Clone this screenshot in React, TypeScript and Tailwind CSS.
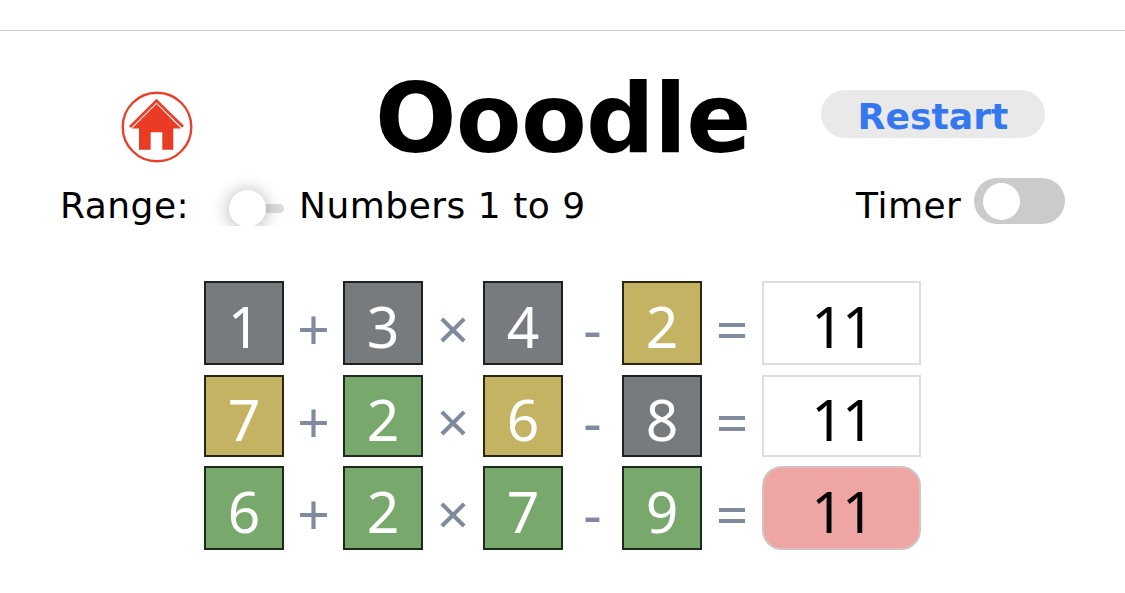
import React, { useState } from "react";
import clsx from "clsx";

type Status = "absent" | "present" | "correct";

interface Guess {
  digits: string[];
  statuses: Status[];
  total: number;
  solved: boolean;
  row: string;
}

const OPERATORS = ["+", "×", "-", "="];

const TILE_COLORS: Record<Status, string> = {
  absent: "bg-[#787b7e] border-[#1e2022]",
  present: "bg-[#c5b364] border-[#2c2712]",
  correct: "bg-[#79a86c] border-[#1d2b1a]",
};

const GUESSES: Guess[] = [
  { digits: ["1", "3", "4", "2"], statuses: ["absent", "absent", "absent", "present"], total: 11, solved: false, row: "h-[84px] mb-[10px]" },
  { digits: ["7", "2", "6", "8"], statuses: ["present", "correct", "present", "absent"], total: 11, solved: false, row: "h-[82px] mb-[9px]" },
  { digits: ["6", "2", "7", "9"], statuses: ["correct", "correct", "correct", "correct"], total: 11, solved: true, row: "h-[84px]" },
];

function HomeIcon() {
  return (
    <svg className="h-[72px] w-[72px]" viewBox="0 0 72 72" fill="none">
      <circle cx="36" cy="36" r="34.3" stroke="#e8412a" strokeWidth="2.4" />
      <path d="M9 36 L35.5 9.7 L62 35.8" stroke="#e8412a" strokeWidth="2.8" />
      <path d="M35.5 13 L60 37.4 H52.3 V58.7 H41.3 V41.3 H29.7 V58.7 H18 V37.4 H11 Z" fill="#ea3c25" />
    </svg>
  );
}

function GuessRow({ guess }: { guess: Guess }) {
  return (
    <div className={clsx("grid grid-cols-[80px_59px_80px_60px_80px_59px_80px_60px_159px]", guess.row)}>
      {guess.digits.map((digit, i) => (
        <React.Fragment key={i}>
          <div className={clsx("flex items-center justify-center border-2 pt-[5px] text-white", TILE_COLORS[guess.statuses[i]])}>
            {digit}
          </div>
          <div className="flex items-center justify-center pt-[10px] text-[#7f8a9c]">{OPERATORS[i]}</div>
        </React.Fragment>
      ))}
      <div
        className={clsx(
          "flex items-center justify-center border-2 pt-[5px] pl-[1px] tracking-[-1.8px] text-black",
          guess.solved ? "rounded-[20px] border-[#d3c3c4] bg-[#eea5a4]" : "border-[#dedede] bg-white"
        )}
      >
        {guess.total}
      </div>
    </div>
  );
}

export default function App() {
  const [timer, setTimer] = useState(false);

  return (
    <div className="h-[593px] w-[1125px] overflow-hidden bg-white font-['DejaVu_Sans',Verdana,sans-serif] text-black">
      <div className="h-[31px] border-b border-[#cccccc]" />

      <header className="flex h-[142px] items-start">
        <button className="mt-[60px] ml-[121px]" title="Home">
          <HomeIcon />
        </button>
        <h1 className="mt-[33px] ml-[182px] w-[378px] text-[96px] leading-[110px] font-bold tracking-[-0.8px]">Ooodle</h1>
        <button className="mt-[59px] ml-[68px] h-[48px] w-[224px] rounded-full bg-[#e9e9e9] pt-[6px] text-[36.2px] leading-[42px] font-bold text-[#3478f0]">
          Restart
        </button>
      </header>

      {/* Settings */}
      <div className="flex h-[53px] items-start text-[36px] leading-[44px] tracking-[0.5px]">
        <span className="mt-[11px] ml-[60px] w-[150px]">Range:</span>
        <div className="flex h-[53px] w-[76px] items-center overflow-hidden pt-[17px] pl-[19px]">
          <div className="z-10 h-[37px] w-[37px] shrink-0 rounded-full bg-white shadow-[0_1px_18px_rgba(0,0,0,0.32)]" />
          <div className="-ml-[4px] h-[9px] w-[22px] shrink-0 rounded-full bg-[#dcdcdc]" />
        </div>
        <span className="mt-[11px] ml-[13px] w-[299px] whitespace-nowrap">Numbers 1 to 9</span>
        <span className="mt-[11px] ml-[258px] w-[118px]">Timer</span>
        <button
          className={clsx("mt-[5px] flex h-[46px] w-[91px] items-center rounded-full px-[9px]", timer ? "justify-end bg-blue-500" : "bg-[#cbcbcb]")}
          onClick={() => setTimer(!timer)}
        >
          <span className="h-[37px] w-[37px] rounded-full bg-white" />
        </button>
      </div>

      {/* Board */}
      <main className="mt-[55px] ml-[204px] w-[717px] font-['Noto_Sans',sans-serif] text-[57px] leading-[60px]">
        {GUESSES.map((guess, i) => (
          <GuessRow key={i} guess={guess} />
        ))}
      </main>
    </div>
  );
}
